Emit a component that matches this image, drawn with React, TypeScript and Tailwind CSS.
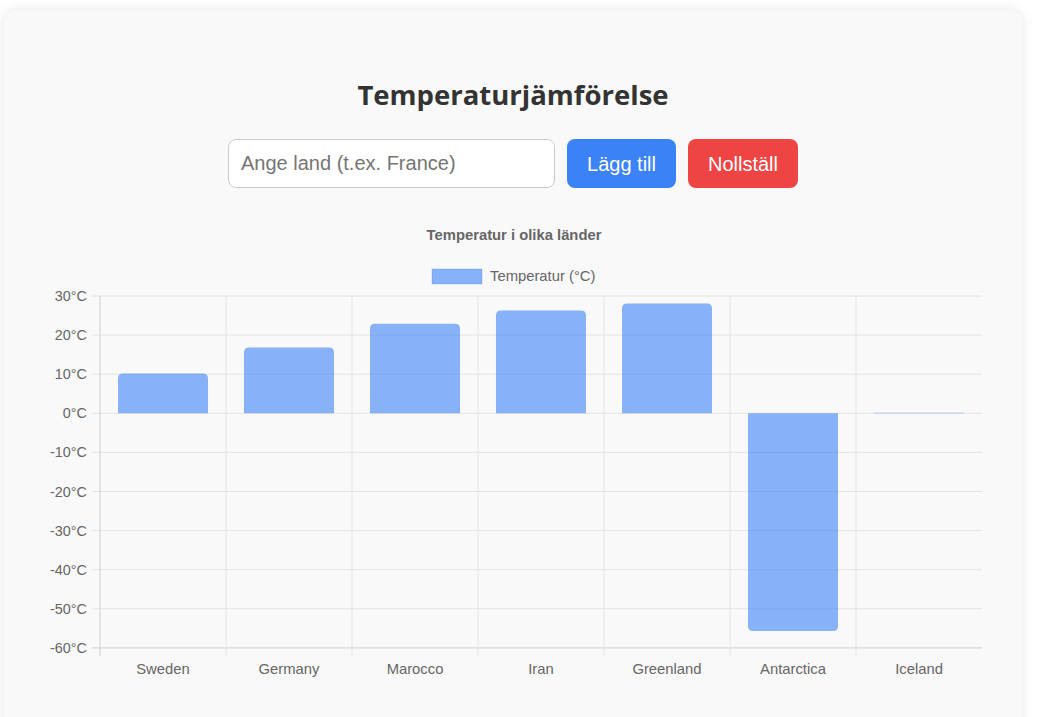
import React from 'react'

const data = [
  { name: 'Sweden', value: 10.2 },
  { name: 'Germany', value: 16.8 },
  { name: 'Marocco', value: 22.9 },
  { name: 'Iran', value: 26.3 },
  { name: 'Greenland', value: 28.1 },
  { name: 'Antarctica', value: -55.7 },
  { name: 'Iceland', value: 0.15 },
]

const ticks = [30, 20, 10, 0, -10, -20, -30, -40, -50, -60]

// plot box in svg coords
const left = 75
const right = 957
const top = 76
const step = 3.91 // px per degree
const yOf = (v: number) => top + (30 - v) * step
const colW = (right - left) / data.length
const barW = 90

const barPath = (x: number, v: number) => {
  const y0 = yOf(0)
  const y1 = yOf(v)
  const h = Math.abs(y1 - y0)
  const r = Math.min(5, h / 2)
  if (v >= 0) {
    return `M${x},${y0} L${x},${y1 + r} Q${x},${y1} ${x + r},${y1} L${x + barW - r},${y1} Q${x + barW},${y1} ${x + barW},${y1 + r} L${x + barW},${y0} Z`
  }
  return `M${x},${y0} L${x},${y1 - r} Q${x},${y1} ${x + r},${y1} L${x + barW - r},${y1} Q${x + barW},${y1} ${x + barW},${y1 - r} L${x + barW},${y0} Z`
}

const TempChart = () => {
  const bottom = yOf(-60)
  return (
    <svg width={978} height={480} className="block" style={{ fontFamily: '"Liberation Sans", Arial, sans-serif' }}>
      <text x={489} y={20} textAnchor="middle" fontSize={14.8} fontWeight={700} fill="#666">
        Temperatur i olika länder
      </text>
      <rect x={407} y={49} width={50} height={15} fill="rgba(59,130,246,0.6)" stroke="rgba(59,130,246,0.25)" />
      <text x={465} y={61} fontSize={14.8} fill="#666">
        Temperatur (°C)
      </text>

      {ticks.map((t) => (
        <g key={t}>
          <line x1={left - 8} x2={right} y1={yOf(t)} y2={yOf(t)} stroke={t === -60 ? '#cfcfcf' : '#e4e4e4'} strokeWidth={1} />
          <text x={62} y={yOf(t) + 5} textAnchor="end" fontSize={14.4} fill="#666">
            {t}°C
          </text>
        </g>
      ))}

      {data.map((d, i) => (
        <line key={d.name} x1={left + i * colW} x2={left + i * colW} y1={top} y2={bottom + 8} stroke={i === 0 ? '#cfcfcf' : '#e4e4e4'} />
      ))}

      {data.map((d, i) => {
        const x = left + i * colW + (colW - barW) / 2
        return <path key={d.name} d={barPath(x, d.value)} fill="rgba(59,130,246,0.6)" />
      })}

      {data.map((d, i) => (
        <text key={d.name} x={left + i * colW + colW / 2} y={454} textAnchor="middle" fontSize={14.8} fill="#666">
          {d.name}
        </text>
      ))}
    </svg>
  )
}

export default function App() {
  return (
    <div className="min-h-[717px] overflow-hidden bg-white">
      <div className="ml-[4px] mt-[10px] h-[740px] w-[1018px] rounded-xl bg-[#f9f9f9] pt-[68px] shadow-[0_0_12px_rgba(0,0,0,0.1)]">
        <h1 className="text-center text-[27.5px] font-bold leading-[34px] text-[#333]" style={{ fontFamily: '"Open Sans", Lato, sans-serif' }}>
          Temperaturjämförelse
        </h1>
        <div className="mt-[27px] flex justify-center gap-3" style={{ fontFamily: '"Liberation Sans", Arial, sans-serif' }}>
          <input
            placeholder="Ange land (t.ex. France)"
            className="h-[49px] w-[327px] rounded-lg border border-[#ccc] bg-white px-3 text-[20px] text-[#333] placeholder:text-[#757575] outline-none"
          />
          <button className="h-[49px] w-[109px] rounded-lg bg-[#3b82f6] text-[20px] text-white">Lägg till</button>
          <button className="h-[49px] w-[110px] rounded-lg bg-[#ef4444] text-[20px] text-white">Nollställ</button>
        </div>
        <div className="ml-[21px] mt-[32px]">
          <TempChart />
        </div>
      </div>
    </div>
  )
}
